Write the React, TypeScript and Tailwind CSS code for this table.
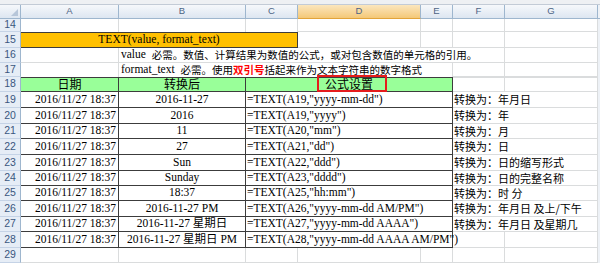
import type { ReactNode } from "react";

const grid = "border-[#dadcdd]";
const dark = "border-[#3c3c3c]";
const serif = "font-['Liberation_Serif','Noto_Sans_CJK_SC',serif] text-[11.5px] leading-none";
const cjk = "font-['Noto_Sans_CJK_SC','Liberation_Sans',sans-serif] text-[11px] leading-none";
const cjkSm = "font-['Noto_Sans_CJK_SC','Liberation_Sans',sans-serif] text-[10.5px] leading-none";

const rows = [
  { n: 19, h: "h-[16px]", b: "2016-11-27", c: '=TEXT(A19,"yyyy-mm-dd")', f: "转换为：年月日" },
  { n: 20, h: "h-[16px]", b: "2016", c: '=TEXT(A19,"yyyy")', f: "转换为：年" },
  { n: 21, h: "h-[15px]", b: "11", c: '=TEXT(A20,"mm")', f: "转换为：月" },
  { n: 22, h: "h-[16px]", b: "27", c: '=TEXT(A21,"dd")', f: "转换为：日" },
  { n: 23, h: "h-[16px]", b: "Sun", c: '=TEXT(A22,"ddd")', f: "转换为：日的缩写形式" },
  { n: 24, h: "h-[15px]", b: "Sunday", c: '=TEXT(A23,"dddd")', f: "转换为：日的完整名称" },
  { n: 25, h: "h-[15px]", b: "18:37", c: '=TEXT(A25,"hh:mm")', f: "转换为：时 分" },
  { n: 26, h: "h-[16px]", b: "2016-11-27 PM", c: '=TEXT(A26,"yyyy-mm-dd AM/PM")', f: "转换为：年月日 及上/下午" },
  { n: 27, h: "h-[15px]", b: "2016-11-27 星期日", c: '=TEXT(A27,"yyyy-mm-dd AAAA")', f: "转换为：年月日 及星期几" },
  { n: 28, h: "h-[16px]", b: "2016-11-27 星期日 PM", c: '=TEXT(A28,"yyyy-mm-dd AAAA AM/PM")', f: "" },
];

const Cell = ({ w, b = grid, cls = "", children }: { w: string; b?: string; cls?: string; children?: ReactNode }) => (
  <div className={`${w} h-full shrink-0 border-r border-b ${b} flex items-center whitespace-nowrap ${cls}`}>
    {children}
  </div>
);

const RowHead = ({ n, cls = "" }: { n: number; cls?: string }) => (
  <div className={`w-[21px] h-full shrink-0 bg-[#e6edf6] border-r border-b border-r-[#9eb6ce] border-b-[#c5d3e6] flex items-center justify-center font-['Liberation_Sans',sans-serif] text-[10.5px] text-[#3a577e] ${cls}`}>
    {n}
  </div>
);

const Tail = ({ cls = "" }: { cls?: string }) => <div className={`flex-1 h-full bg-[#edf1f6] ${cls}`} />;

const colHeads = [
  { l: "A", w: "w-[98px]" },
  { l: "B", w: "w-[127px]" },
  { l: "C", w: "w-[52px]" },
  { l: "D", w: "w-[123px]", on: true },
  { l: "E", w: "w-[32px]" },
  { l: "F", w: "w-[52px]" },
  { l: "G", w: "w-[93px]" },
];

export default function App() {
  return (
    <div className="relative w-[600px] h-[263px] overflow-hidden bg-white text-black">
      {/* strip above headers */}
      <div className="h-[5px] bg-[#eef0f3] border-b border-[#c3cbd6]" />

      {/* column headers */}
      <div className="flex h-[14px]">
        <div className="w-[21px] h-full shrink-0 relative bg-linear-to-b from-[#f6f8fb] to-[#dde6f1] border-r border-b border-[#9eb6ce]">
          <div className="absolute right-[2px] bottom-[2px] w-0 h-0 border-l-[7px] border-l-transparent border-b-[7px] border-b-[#b7c6d9]" />
        </div>
        {colHeads.map((c) => (
          <div
            key={c.l}
            className={`${c.w} h-full shrink-0 border-r border-b border-[#9eb6ce] flex items-center justify-center font-['Liberation_Sans',sans-serif] text-[9.5px] text-[#4d6484] ${
              c.on ? "bg-linear-to-b from-[#fbe6bd] to-[#f4c877] border-b-[#e2a43a]" : "bg-linear-to-b from-[#f6f8fb] to-[#dde6f1]"
            }`}
          >
            {c.l}
          </div>
        ))}
        <Tail cls="border-b border-[#9eb6ce]" />
      </div>

      {/* row 14 */}
      <div className="flex h-[13px]">
        <RowHead n={14} />
        <Cell w="w-[98px]" cls="border-b-0" />
        <Cell w="w-[127px]" cls="border-b-0" />
        <Cell w="w-[52px]" cls="border-b-0" />
        <Cell w="w-[123px]" />
        <Cell w="w-[32px]" />
        <Cell w="w-[52px]" />
        <Cell w="w-[93px]" />
        <Tail />
      </div>

      {/* row 15 */}
      <div className="flex h-[16px]">
        <RowHead n={15} />
        <Cell w="w-[277px]" b={dark} cls={`border-t bg-[#ffc000] justify-center ${serif}`}>
          TEXT(value, format_text)
        </Cell>
        <Cell w="w-[123px]" />
        <Cell w="w-[32px]" />
        <Cell w="w-[52px]" />
        <Cell w="w-[93px]" />
        <Tail />
      </div>

      {/* row 16 */}
      <div className="flex h-[15px]">
        <RowHead n={16} />
        <Cell w="w-[98px]" />
        <Cell w="w-[386px]" cls={`pl-[2px] ${serif}`}>
          value&nbsp;&nbsp;<span className={cjkSm}>必需。数值、计算结果为数值的公式，或对包含数值的单元格的引用。</span>
        </Cell>
        <Cell w="w-[93px]" />
        <Tail />
      </div>

      {/* row 17 */}
      <div className="flex h-[14px]">
        <RowHead n={17} />
        <Cell w="w-[98px]" cls="border-b-0" />
        <Cell w="w-[334px]" cls={`pl-[2px] border-b-0 ${serif}`}>
          format_text&nbsp;&nbsp;
          <span className={cjkSm}>
            必需。使用<span className="text-[#ff0000] font-bold">双引号</span>括起来作为文本字符串的数字格式
          </span>
        </Cell>
        <Cell w="w-[52px]" />
        <Cell w="w-[93px]" />
        <Tail />
      </div>

      {/* row 18 */}
      <div className="flex h-[15px]">
        <RowHead n={18} />
        <Cell w="w-[98px]" b={dark} cls={`border-t bg-[#99ff99] justify-center items-end pb-[1px] ${cjk} text-[12px]`}>
          日期
        </Cell>
        <Cell w="w-[127px]" b={dark} cls={`border-t bg-[#99ff99] justify-center items-end pb-[1px] ${cjk} text-[12px]`}>
          转换后
        </Cell>
        <Cell w="w-[207px]" b={dark} cls={`border-t bg-[#99ff99] justify-center items-end pb-[1px] ${cjk} text-[12px]`}>
          公式设置
        </Cell>
        <Cell w="w-[52px]" cls="border-t" />
        <Cell w="w-[93px]" cls="border-t" />
        <Tail />
      </div>

      {/* data rows */}
      {rows.map((r) => (
        <div key={r.n} className={`flex ${r.h}`}>
          <RowHead n={r.n} />
          <Cell w="w-[98px]" b={dark} cls={`justify-end pr-[2px] ${serif}`}>
            2016/11/27 18:37
          </Cell>
          <Cell w="w-[127px]" b={dark} cls={`justify-center ${serif}`}>
            {r.b}
          </Cell>
          <Cell w="w-[207px]" b={dark} cls={`pl-[1px] ${serif}`}>
            {r.c}
          </Cell>
          {r.f ? (
            <Cell w="w-[145px]" cls={`pl-[1px] ${cjk}`}>
              {r.f}
            </Cell>
          ) : (
            <>
              <Cell w="w-[52px]" />
              <Cell w="w-[93px]" />
            </>
          )}
          <Tail />
        </div>
      ))}

      {/* rows 29, 30 */}
      {[29, 30].map((n) => (
        <div key={n} className="flex h-[15px]">
          <RowHead n={n} />
          <Cell w="w-[98px]" />
          <Cell w="w-[127px]" />
          <Cell w="w-[52px]" />
          <Cell w="w-[123px]" />
          <Cell w="w-[32px]" />
          <Cell w="w-[52px]" />
          <Cell w="w-[93px]" />
          <Tail />
        </div>
      ))}

      {/* red highlight box */}
      <div className="absolute left-[317px] top-[75px] w-[70px] h-[17px] border-2 border-[#e51c1c]" />
    </div>
  );
}
